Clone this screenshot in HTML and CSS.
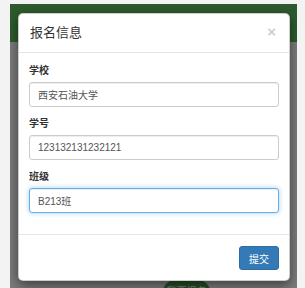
FILE: index.html
```html
<!DOCTYPE html>
<html lang="zh-CN">
<head>
  <meta charset="UTF-8">
  <meta name="viewport" content="width=device-width, initial-scale=1.0">
  <title>报名信息</title>
  <link rel="stylesheet" href="styles.css">
</head>
<body>

  <div class="screen">
    <div class="topbar"></div>

    <div class="main">
      <a href="#" class="pill-btn">我要报名</a>
    </div>

    <!-- dimmed page behind the dialog -->
    <div class="backdrop"></div>

    <div class="modal">
      <div class="modal-header">
        <span class="close">&times;</span>
        <h4 class="modal-title">报名信息</h4>
      </div>

      <div class="modal-body">
        <div class="form-group">
          <label>学校</label>
          <input type="text" class="form-control" value="西安石油大学">
        </div>
        <div class="form-group">
          <label>学号</label>
          <input type="text" class="form-control" value="123132131232121">
        </div>
        <div class="form-group">
          <label>班级</label>
          <input type="text" class="form-control focus" value="B213班">
        </div>
      </div>

      <div class="modal-footer">
        <button class="btn-primary">提交</button>
      </div>
    </div>
  </div>

</body>
</html>
```

FILE: styles.css
```css
body {
  margin: 0;
  padding: 0;
  background: #f3f3f3;
  font-family: 'Liberation Sans', 'Noto Sans CJK SC', sans-serif;
  color: #333;
}

.screen {
  position: relative;
  width: 287px;
  height: 284px;
  margin: 4px 0 0 10px;
  background: #f6f6f6;
  overflow: hidden;
}

.topbar {
  height: 38px;
  background: #5ab65a;
}

.main {
  padding-top: 238px;
}

.pill-btn {
  display: block;
  width: 47px;
  height: 24px;
  margin-left: 153px;
  border-radius: 12px;
  background: #4a9e4a;
  color: #fff;
  font-size: 10px;
  line-height: 24px;
  text-align: center;
  text-decoration: none;
}

.backdrop {
  position: absolute;
  top: 0;
  left: 0;
  right: 0;
  bottom: 0;
  background: rgba(0, 0, 0, 0.5);
}

.modal {
  position: absolute;
  top: 9px;
  left: 8px;
  width: 270px;
  background: #fff;
  border: 1px solid rgba(0, 0, 0, 0.2);
  border-radius: 5px;
  box-shadow: 0 4px 12px rgba(0, 0, 0, 0.5);
}

.modal-header {
  padding: 10px 11px;
  border-bottom: 1px solid #e5e5e5;
}

.modal-title {
  margin: 0;
  font-size: 13px;
  font-weight: normal;
  line-height: 18px;
}

.close {
  float: right;
  font-size: 15px;
  font-weight: bold;
  line-height: 16px;
  color: #000;
  opacity: 0.2;
  margin-right: 2px;
}

.modal-body {
  padding: 11px 10px;
}

.form-group {
  margin-bottom: 10px;
}

.form-group label {
  display: block;
  font-size: 10px;
  font-weight: bold;
  line-height: 14px;
  margin-bottom: 4px;
}

.form-control {
  display: block;
  box-sizing: border-box;
  width: 100%;
  height: 25px;
  margin: 0;
  padding: 0 8px;
  font-family: inherit;
  font-size: 10px;
  color: #555;
  background: #fff;
  border: 1px solid #ccc;
  border-radius: 3px;
  box-shadow: inset 0 1px 1px rgba(0, 0, 0, 0.075);
  outline: none;
}

.form-control.focus {
  border-color: #66afe9;
  box-shadow: inset 0 1px 1px rgba(0, 0, 0, 0.075), 0 0 5px rgba(102, 175, 233, 0.6);
}

.modal-footer {
  padding: 11px 10px 10px;
  border-top: 1px solid #e5e5e5;
  text-align: right;
}

.btn-primary {
  height: 24px;
  padding: 0 9px;
  font-family: inherit;
  font-size: 10px;
  color: #fff;
  background: #337ab7;
  border: 1px solid #2e6da4;
  border-radius: 3px;
  vertical-align: top;
}
```
